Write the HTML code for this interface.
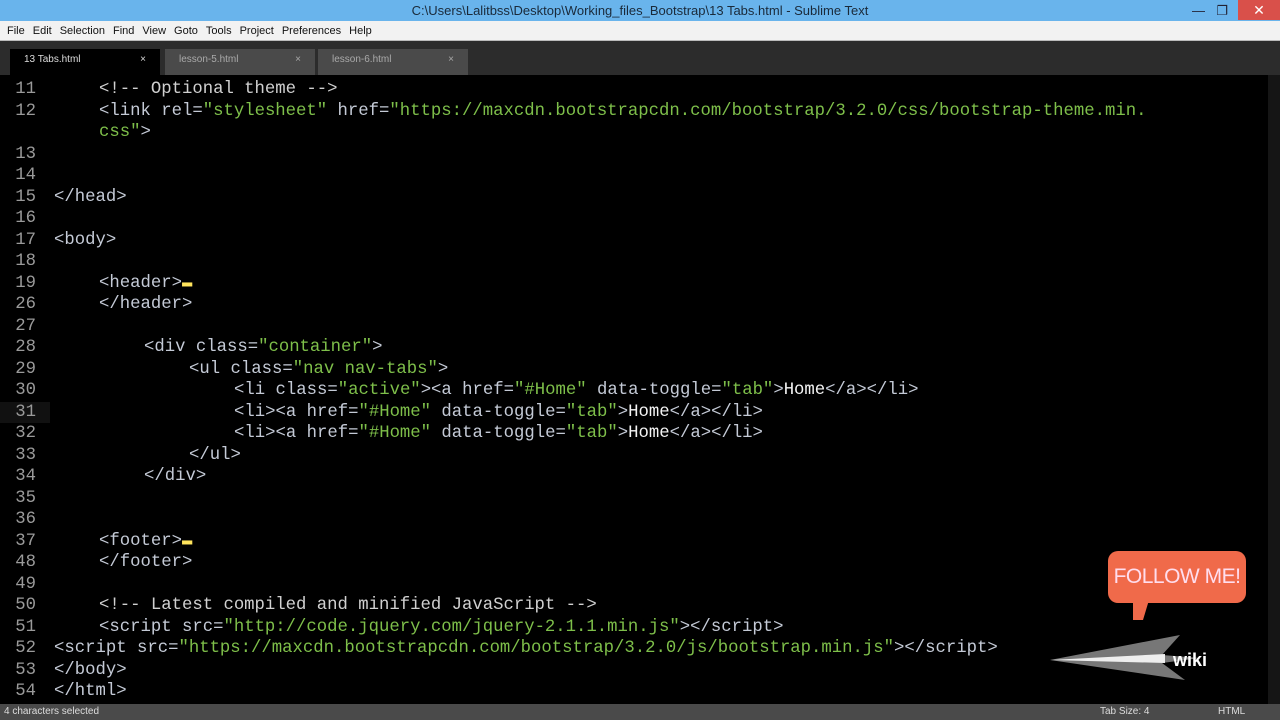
<!DOCTYPE html>
<html><head><meta charset="utf-8"><style>
*{margin:0;padding:0;box-sizing:border-box}
body{width:1280px;height:720px;overflow:hidden;background:#000;font-family:"Liberation Sans",sans-serif;position:relative}
#title{position:absolute;left:0;top:0;width:1280px;height:21px;background:#69b4ec;color:#1a2a3a;font-size:13px;text-align:center;line-height:21px}
#close{position:absolute;right:0;top:0;width:42px;height:20px;background:#d9504a;color:#fff;text-align:center;font-size:14px;line-height:20px}
#menu{position:absolute;left:0;top:21px;width:1280px;height:20px;background:#f2f2f2;border-bottom:1px solid #bbb;font-size:11px;line-height:20px;color:#111}
#menu span{margin-left:7px;margin-right:1px}
#tabs{position:absolute;left:0;top:41px;width:1280px;height:34px;background:#2c2c2c}
.tab{position:absolute;top:8px;height:26px;font-size:10px;color:#aaa;line-height:22px;padding-left:14px}
.tab b{position:absolute;right:14px;font-weight:normal}
#code{position:absolute;left:0;top:79px;width:1268px;height:625px;font-family:"Liberation Mono",monospace;font-size:17.3px;color:#f4f4f4}
.r{position:absolute;white-space:pre;height:21px;line-height:21px}
.n{position:absolute;left:0;width:36px;text-align:right;color:#9a9a9a}
.t{color:#c4cad6}.s{color:#7ebf4a}.c{color:#d0d0d0}
#scroll{position:absolute;left:1268px;top:75px;width:12px;height:629px;background:#151515}
#status{position:absolute;left:0;top:704px;width:1280px;height:16px;background:#4a4a4a;color:#ddd;font-size:10px;line-height:16px}
</style></head><body>
<div id="title">C:\Users\Lalitbss\Desktop\Working_files_Bootstrap\13 Tabs.html - Sublime Text<span style="position:absolute;right:75px;top:0;color:#223">&#8212;</span><span style="position:absolute;right:52px;top:0;color:#223">&#10064;</span></div>
<div id="close">&#10005;</div>
<div id="menu"><span>File</span><span>Edit</span><span>Selection</span><span>Find</span><span>View</span><span>Goto</span><span>Tools</span><span>Project</span><span>Preferences</span><span>Help</span></div>
<div id="tabs">
<div class="tab" style="left:10px;width:150px;background:#000;color:#ddd">13 Tabs.html<b>×</b></div>
<div class="tab" style="left:165px;width:150px;background:#4a4a4a">lesson-5.html<b>×</b></div>
<div class="tab" style="left:318px;width:150px;background:#4a4a4a">lesson-6.html<b>×</b></div>
</div>
<div id="code">
<div class="r" style="top:0"><span class="n">11</span><span style="position:absolute;left:99px" class="c">&lt;!-- Optional theme --&gt;</span></div>
<div class="r" style="top:21.5px"><span class="n">12</span><span style="position:absolute;left:99px"><span class="t">&lt;link rel=</span><span class="s">"stylesheet"</span><span class="t"> href=</span><span class="s">"https://maxcdn.bootstrapcdn.com/bootstrap/3.2.0/css/bootstrap-theme.min.</span></span></div>
<div class="r" style="top:43px"><span style="position:absolute;left:99px"><span class="s">css"</span><span class="t">&gt;</span></span></div>
<div class="r" style="top:64.5px"><span class="n">13</span></div>
<div class="r" style="top:86px"><span class="n">14</span></div>
<div class="r" style="top:107.5px"><span class="n">15</span><span style="position:absolute;left:54px" class="t">&lt;/head&gt;</span></div>
<div class="r" style="top:129px"><span class="n">16</span></div>
<div class="r" style="top:150.5px"><span class="n">17</span><span style="position:absolute;left:54px" class="t">&lt;body&gt;</span></div>
<div class="r" style="top:172px"><span class="n">18</span></div>
<div class="r" style="top:193.5px"><span class="n">19</span><span style="position:absolute;left:99px" class="t">&lt;header&gt;<span style="color:#ffe45c">&#9644;</span></span></div>
<div class="r" style="top:215px"><span class="n">26</span><span style="position:absolute;left:99px" class="t">&lt;/header&gt;</span></div>
<div class="r" style="top:236.5px"><span class="n">27</span></div>
<div class="r" style="top:258px"><span class="n">28</span><span style="position:absolute;left:144px"><span class="t">&lt;div class=</span><span class="s">"container"</span><span class="t">&gt;</span></span></div>
<div class="r" style="top:279.5px"><span class="n">29</span><span style="position:absolute;left:189px"><span class="t">&lt;ul class=</span><span class="s">"nav nav-tabs"</span><span class="t">&gt;</span></span></div>
<div class="r" style="top:301px"><span class="n">30</span><span style="position:absolute;left:234px"><span class="t">&lt;li class=</span><span class="s">"active"</span><span class="t">&gt;&lt;a href=</span><span class="s">"#Home"</span><span class="t"> data-toggle=</span><span class="s">"tab"</span><span class="t">&gt;</span>Home<span class="t">&lt;/a&gt;&lt;/li&gt;</span></span></div>
<div class="r" style="top:322.5px;left:0;width:50px;background:#111"><span class="n">31</span></div>
<div class="r" style="top:322.5px"><span style="position:absolute;left:234px"><span class="t">&lt;li&gt;&lt;a href=</span><span class="s">"#Home"</span><span class="t"> data-toggle=</span><span class="s">"tab"</span><span class="t">&gt;</span>Home<span class="t">&lt;/a&gt;&lt;/li&gt;</span></span></div>
<div class="r" style="top:344px"><span class="n">32</span><span style="position:absolute;left:234px"><span class="t">&lt;li&gt;&lt;a href=</span><span class="s">"#Home"</span><span class="t"> data-toggle=</span><span class="s">"tab"</span><span class="t">&gt;</span>Home<span class="t">&lt;/a&gt;&lt;/li&gt;</span></span></div>
<div class="r" style="top:365.5px"><span class="n">33</span><span style="position:absolute;left:189px" class="t">&lt;/ul&gt;</span></div>
<div class="r" style="top:387px"><span class="n">34</span><span style="position:absolute;left:144px" class="t">&lt;/div&gt;</span></div>
<div class="r" style="top:408.5px"><span class="n">35</span></div>
<div class="r" style="top:430px"><span class="n">36</span></div>
<div class="r" style="top:451.5px"><span class="n">37</span><span style="position:absolute;left:99px" class="t">&lt;footer&gt;<span style="color:#ffe45c">&#9644;</span></span></div>
<div class="r" style="top:473px"><span class="n">48</span><span style="position:absolute;left:99px" class="t">&lt;/footer&gt;</span></div>
<div class="r" style="top:494.5px"><span class="n">49</span></div>
<div class="r" style="top:516px"><span class="n">50</span><span style="position:absolute;left:99px" class="c">&lt;!-- Latest compiled and minified JavaScript --&gt;</span></div>
<div class="r" style="top:537.5px"><span class="n">51</span><span style="position:absolute;left:99px"><span class="t">&lt;script src=</span><span class="s">"http://code.jquery.com/jquery-2.1.1.min.js"</span><span class="t">&gt;&lt;/script&gt;</span></span></div>
<div class="r" style="top:559px"><span class="n">52</span><span style="position:absolute;left:54px"><span class="t">&lt;script src=</span><span class="s">"https://maxcdn.bootstrapcdn.com/bootstrap/3.2.0/js/bootstrap.min.js"</span><span class="t">&gt;&lt;/script&gt;</span></span></div>
<div class="r" style="top:580.5px"><span class="n">53</span><span style="position:absolute;left:54px" class="t">&lt;/body&gt;</span></div>
<div class="r" style="top:602px"><span class="n">54</span><span style="position:absolute;left:54px" class="t">&lt;/html&gt;</span></div>
</div>
<div id="scroll"></div>
<div style="position:absolute;left:1108px;top:551px;width:138px;height:52px;background:#f06a4a;border-radius:10px;color:#fde;font-size:21px;text-align:center;line-height:52px;white-space:nowrap;letter-spacing:-0.5px">FOLLOW ME!</div>
<div style="position:absolute;left:1133px;top:600px;width:0;height:0;border-left:10px solid #f06a4a;border-right:6px solid transparent;border-top:20px solid #f06a4a"></div>
<svg style="position:absolute;left:1040px;top:630px" width="180" height="55"><polygon points="10,30 140,5 122,25 160,28 122,33 145,50" fill="#777"/><polygon points="10,30 125,24 125,33" fill="#eee"/><text x="133" y="36" fill="#fff" font-size="18" font-weight="bold" font-family="Liberation Sans">wiki</text></svg>
<div id="status"><span style="margin-left:4px">4 characters selected</span><span style="position:absolute;left:1100px">Tab Size: 4</span><span style="position:absolute;left:1218px">HTML</span></div>
</body></html>
